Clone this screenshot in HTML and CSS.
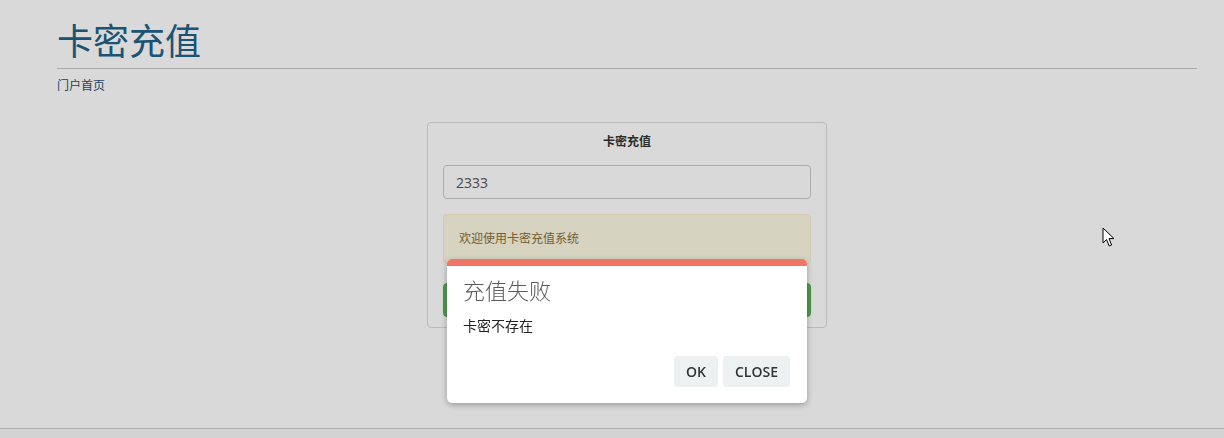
FILE: index.html
```html
<!DOCTYPE html>
<html lang="zh-CN">
<head>
<meta charset="utf-8">
<title>卡密充值</title>
<link rel="stylesheet" href="styles.css">
</head>
<body>
<div class="page">
  <div class="container">
    <h1 class="page-title">卡密充值</h1>
    <hr class="rule">
    <a class="home-link" href="#">门户首页</a>
    <div class="card">
      <div class="card-title">卡密充值</div>
      <input class="code-input" type="text" value="2333">
      <div class="alert">欢迎使用卡密充值系统</div>
      <button class="submit-btn" type="button">充值</button>
    </div>
  </div>
  <footer class="footer"></footer>
</div>
<div class="overlay"></div>
<div class="modal">
  <div class="modal-bar"></div>
  <div class="modal-body">
    <div class="modal-title">充值失败</div>
    <div class="modal-text">卡密不存在</div>
    <div class="modal-actions">
      <button class="modal-btn" type="button">OK</button>
      <button class="modal-btn" type="button">CLOSE</button>
    </div>
  </div>
</div>
<svg class="cursor" width="14" height="22" viewBox="0 0 14 22"><path d="M1 1 L1 16 L4.5 12.5 L7.2 19 L9.6 18 L7 11.6 L12 11.6 Z" fill="#fff" stroke="#000" stroke-width="1" stroke-linejoin="round"/></svg>
</body>
</html>
```

FILE: styles.css
```css
* { box-sizing: border-box; }
html, body { margin: 0; padding: 0; background: #fff; height: 100%; overflow: hidden; }
body {
  font-family: "Liberation Sans", "Noto Sans CJK SC", sans-serif;
  font-size: 12px;
  color: #333;
}
.page { min-height: 100%; display: flex; flex-direction: column; }
.container { padding: 0 27px 0 57px; }
.page-title {
  margin: 23px 0 0;
  font-size: 36px;
  line-height: 40px;
  font-weight: normal;
  color: #22628a;
}
.rule { margin: 5px 0 0; border: 0; border-top: 1px solid #cbcbcb; height: 0; }
.home-link {
  display: block;
  margin-top: 9px;
  line-height: 17px;
  font-size: 12px;
  color: #1d4f72;
  text-decoration: none;
}
.card {
  width: 400px;
  margin: 27px auto 0;
  border: 1px solid #dcdcdc;
  border-radius: 4px;
  padding: 11px 15px 10px;
  display: flex;
  flex-direction: column;
}
.card-title {
  text-align: center;
  font-weight: bold;
  line-height: 17px;
  color: #333;
  margin-bottom: 14px;
}
.code-input {
  height: 34px;
  border: 1px solid #ccc;
  border-radius: 4px;
  padding: 0 12px;
  font-family: "Open Sans", "Noto Sans CJK SC", sans-serif;
  font-size: 14px;
  color: #555;
  background: #fff;
  margin: 0;
}
.alert {
  margin-top: 15px;
  padding: 16px 15px 15px;
  line-height: 17px;
  background: #fcf8e3;
  border: 1px solid #faebcc;
  border-radius: 4px;
  color: #8a6d3b;
}
.submit-btn {
  margin-top: 19px;
  height: 34px;
  border: 1px solid #4cae4c;
  border-radius: 4px;
  background: #5cb85c;
  color: #fff;
  font-size: 14px;
  font-family: inherit;
}
.footer {
  margin-top: auto;
  height: 10px;
  border-top: 1px solid #cdcdcd;
  background: #f8f8f8;
}
.overlay {
  position: fixed;
  inset: 0;
  background: rgba(0, 0, 0, 0.15);
}
.modal {
  position: fixed;
  left: 447px;
  top: 259px;
  width: 360px;
  height: 144px;
  background: #fff;
  border-radius: 5px;
  box-shadow: 0 2px 6px rgba(0, 0, 0, 0.3);
  overflow: hidden;
  display: flex;
  flex-direction: column;
}
.modal-bar { height: 7px; background: #ef7566; flex: none; }
.modal-body { padding: 12px 17px 16px 16px; display: flex; flex-direction: column; flex: 1; }
.modal-title {
  font-size: 22px;
  line-height: 28px;
  color: #5a5a5a;
  font-weight: 300;
}
.modal-text {
  margin-top: 10px;
  font-size: 14px;
  line-height: 20px;
  color: #222;
}
.modal-actions { margin-top: auto; display: flex; justify-content: flex-end; gap: 5px; }
.modal-btn {
  height: 31px;
  padding: 0 12px;
  border: 0;
  border-radius: 3px;
  background: #edf1f2;
  color: #333;
  font-family: "Open Sans", sans-serif;
  font-weight: 600;
  font-size: 14px;
}
.cursor { position: fixed; left: 1102px; top: 227px; }
```
